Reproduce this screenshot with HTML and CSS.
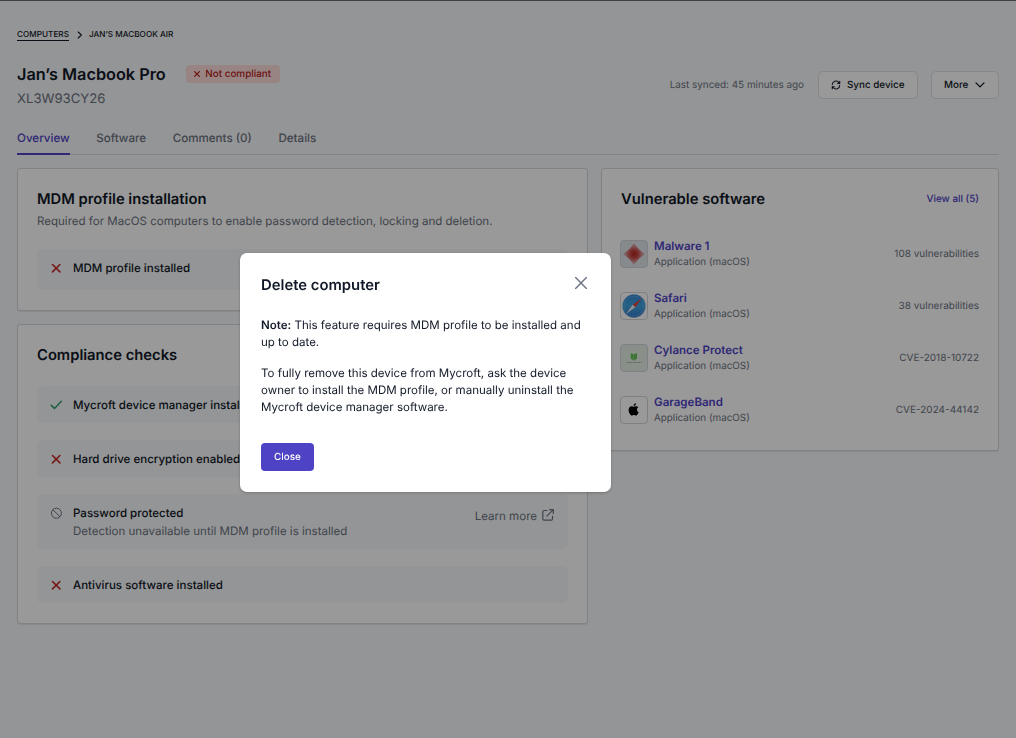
FILE: index.html
```html
<!DOCTYPE html>
<html lang="en">
<head>
  <meta charset="UTF-8">
  <meta name="viewport" content="width=device-width, initial-scale=1.0">
  <title>Jan’s Macbook Pro</title>
  <link rel="stylesheet" href="styles.css">
</head>
<body>

  <main class="page">
    <nav class="breadcrumb">
      <a href="#">Computers</a>
      <svg class="crumb-arrow" viewBox="0 0 6 8"><path d="M1.2 1 4.4 4 1.2 7"/></svg>
      <span>Jan’s Macbook Air</span>
    </nav>

    <header class="device-header">
      <div>
        <div class="title-row">
          <h1>Jan’s Macbook Pro</h1>
          <span class="badge"><svg viewBox="0 0 6 6"><path d="M.6.6 5.4 5.4M5.4.6.6 5.4"/></svg>Not compliant</span>
        </div>
        <p class="serial">XL3W93CY26</p>
      </div>
      <div class="actions">
        <span class="synced">Last synced: 45 minutes ago</span>
        <button type="button" class="btn btn-sync">
          <svg viewBox="0 0 24 24"><path d="M3 11a9 9 0 0 1 15.500-5.600L21 8M21 3v5h-5M21 13a9 9 0 0 1-15.500 5.600L3 16M3 21v-5h5"/></svg>
          Sync device
        </button>
        <button type="button" class="btn btn-more">
          More
          <svg viewBox="0 0 10 6"><path d="M1 .9 5 4.900 9 .9"/></svg>
        </button>
      </div>
    </header>

    <nav class="tabs">
      <a href="#" class="active">Overview</a>
      <a href="#">Software</a>
      <a href="#">Comments (0)</a>
      <a href="#">Details</a>
    </nav>

    <div class="columns">
      <div class="left">
        <section class="card mdm">
          <h2>MDM profile installation</h2>
          <p class="subtitle">Required for MacOS computers to enable password detection, locking and deletion.</p>
          <div class="check tall">
            <svg class="cross" viewBox="0 0 12 12"><path d="M2.500 2.500 9.900 9.900M9.900 2.500 2.500 9.900"/></svg>
            <span>MDM profile installed</span>
          </div>
        </section>

        <section class="card checks">
          <h2>Compliance checks</h2>
          <div class="check">
            <svg class="tick" viewBox="0 0 12 12"><path d="M1.300 6.400 4.500 9.400 11.400 2.300"/></svg>
            <span>Mycroft device manager installed</span>
          </div>
          <div class="check">
            <svg class="cross" viewBox="0 0 12 12"><path d="M2.500 2.500 9.900 9.900M9.900 2.500 2.500 9.900"/></svg>
            <span>Hard drive encryption enabled</span>
          </div>
          <div class="check detailed">
            <svg class="blocked" viewBox="0 0 12 12"><circle cx="6.400" cy="6.200" r="5"/><path d="M2.900 2.700 9.900 9.700"/></svg>
            <div>
              <span>Password protected</span>
              <p>Detection unavailable until MDM profile is installed</p>
            </div>
            <a href="#" class="learn">Learn more
              <svg viewBox="0 0 12 12"><path d="M5 1.500H2A1.200 1.200 0 0 0 .8 2.700V10A1.200 1.200 0 0 0 2 11.200H9.300A1.200 1.200 0 0 0 10.500 10V7M7.600.7H11.300V4.400M11.300.7 4.800 7.200"/></svg>
            </a>
          </div>
          <div class="check">
            <svg class="cross" viewBox="0 0 12 12"><path d="M2.500 2.500 9.900 9.900M9.900 2.500 2.500 9.900"/></svg>
            <span>Antivirus software installed</span>
          </div>
        </section>
      </div>

      <section class="card vulnerable">
        <div class="card-head">
          <h2>Vulnerable software</h2>
          <a href="#">View all (5)</a>
        </div>
        <ul class="apps">
          <li>
            <span class="app-icon malware">
              <svg viewBox="0 0 26 26">
                <defs>
                  <radialGradient id="red"><stop offset="0" stop-color="#b8201d"/><stop offset=".35" stop-color="#c64a47"/><stop offset="1" stop-color="#e1d3d7"/></radialGradient>
                </defs>
                <path fill="url(#red)" d="M13 1.500Q17 9 24.500 13 17 17 13 24.500 9 17 1.500 13 9 9 13 1.500z"/>
              </svg>
            </span>
            <div class="app-name"><a href="#">Malware 1</a><span>Application (macOS)</span></div>
            <span class="count">108 vulnerabilities</span>
          </li>
          <li>
            <span class="app-icon">
              <svg viewBox="0 0 26 26">
                <defs>
                  <linearGradient id="blue" x2="0" y2="1"><stop offset="0" stop-color="#3389d6"/><stop offset=".5" stop-color="#40a3df"/><stop offset="1" stop-color="#2f78cc"/></linearGradient>
                </defs>
                <circle cx="13" cy="13" r="12" fill="#d4dbe2"/>
                <circle cx="13" cy="13" r="11.400" fill="url(#blue)"/>
                <circle cx="13" cy="13" r="9.800" fill="none" stroke="#a6d0ee" stroke-width="1" stroke-dasharray=".5 1.200"/>
                <path fill="#e0403a" d="M20.800 5.200 11.700 11.700 14.300 14.300z"/>
                <path fill="#eceff2" d="M5.200 20.800 11.700 11.700 14.300 14.300z"/>
              </svg>
            </span>
            <div class="app-name"><a href="#">Safari</a><span>Application (macOS)</span></div>
            <span class="count">38 vulnerabilities</span>
          </li>
          <li>
            <span class="app-icon cylance">
              <svg viewBox="0 0 26 26">
                <path fill="#68c45b" d="M9.700 8.300 12.700 8.900V15.800L9.700 13.600zM16 8.300 13 8.900V15.800L16 13.600z"/>
                <path class="wordmark" d="M5.500 17.500H20.500"/>
              </svg>
            </span>
            <div class="app-name"><a href="#">Cylance Protect</a><span>Application (macOS)</span></div>
            <span class="count">CVE-2018-10722</span>
          </li>
          <li>
            <span class="app-icon">
              <svg viewBox="0 0 26 26">
                <path transform="translate(5.200 4.900) scale(.62)" d="M18.710 19.500c-.83 1.240-1.710 2.450-3.050 2.470-1.340.03-1.770-.79-3.290-.79-1.530 0-2 .77-3.270.82-1.310.05-2.300-1.320-3.140-2.530C4.250 17 2.940 12.450 4.700 9.390c.87-1.520 2.430-2.480 4.120-2.510 1.280-.02 2.500.87 3.290.87.78 0 2.260-1.070 3.810-.91.65.03 2.470.26 3.640 1.980-.09.06-2.170 1.280-2.150 3.810.03 3.020 2.650 4.030 2.680 4.040-.03.07-.42 1.440-1.380 2.830M13 3.500c.73-.83 1.940-1.460 2.940-1.500.13 1.170-.34 2.350-1.040 3.190-.69.85-1.830 1.510-2.950 1.420-.15-1.150.41-2.350 1.050-3.110z"/>
              </svg>
            </span>
            <div class="app-name"><a href="#">GarageBand</a><span>Application (macOS)</span></div>
            <span class="count">CVE-2024-44142</span>
          </li>
        </ul>
      </section>
    </div>
  </main>

  <div class="overlay">
    <div class="modal" role="dialog" aria-labelledby="modalTitle">
      <div class="modal-head">
        <h2 id="modalTitle">Delete computer</h2>
        <button type="button" class="dismiss" aria-label="Dismiss"><svg viewBox="0 0 12 12"><path d="M.6.6 11.400 11.400M11.400.6.6 11.400"/></svg></button>
      </div>
      <p><strong>Note:</strong> This feature requires MDM profile to be installed and up to date.</p>
      <p>To fully remove this device from Mycroft, ask the device owner to install the MDM profile, or manually uninstall the Mycroft device manager software.</p>
      <button type="button" class="btn-primary">Close</button>
    </div>
  </div>

</body>
</html>
```

FILE: styles.css
```css
* {
  box-sizing: border-box;
}
body {
  margin: 0;
  height: 738px;
  overflow: hidden;
  font-family: Inter, sans-serif;
  font-size: 11.54px;
  text-rendering: geometricPrecision;
  background: #f7f9fb;
  color: #111827;
}
h1, h2, p, ul {
  margin: 0;
  padding: 0;
}
a {
  color: inherit;
  text-decoration: none;
}
button {
  font-family: inherit;
  text-rendering: inherit;
  cursor: pointer;
}
svg {
  display: block;
  flex: none;
}
svg path {
  stroke-linecap: round;
  stroke-linejoin: round;
}
.page {
  height: 738px;
  padding: 27px 17px 0;
  border-top: 1px solid #6b6b70;
}
.breadcrumb {
  display: flex;
  align-items: center;
  height: 13px;
  font-size: 8.2px;
  font-weight: 500;
  line-height: 11px;
  text-transform: uppercase;
}
.breadcrumb a {
  margin-top: 1px;
  border-bottom: 1px solid #111827;
}
.crumb-arrow {
  width: 6px;
  height: 8px;
  margin: 0 6px 0 8px;
  fill: none;
  stroke: #111827;
  stroke-width: 1.1;
}
.device-header {
  display: flex;
  justify-content: space-between;
  height: 88px;
  padding-top: 21px;
}
.title-row {
  display: flex;
  align-items: center;
  gap: 20px;
  height: 24px;
}
h1 {
  font-size: 16.3px;
  font-weight: 600;
}
.badge {
  display: flex;
  align-items: center;
  gap: 5px;
  height: 18px;
  padding: 0 8.5px;
  border-radius: 4px;
  background: #fcdcda;
  color: #b91c1c;
  font-size: 9.9px;
  font-weight: 500;
}
.badge svg {
  width: 6px;
  height: 6px;
  stroke: #b91c1c;
  stroke-width: 1.2;
}
.serial {
  margin-top: 5px;
  font-size: 13.15px;
  line-height: 17px;
  color: #6b7280;
}
.actions {
  display: flex;
  align-items: center;
  height: 28px;
  margin-top: 9px;
}
.synced {
  margin-right: 14px;
  font-size: 9.9px;
  color: #6b7280;
}
.btn {
  display: flex;
  align-items: center;
  height: 28px;
  padding: 0 12px;
  border: 1px solid #dfe2e6;
  border-radius: 5px;
  background: #fff;
  color: #111827;
  font-size: 9.85px;
  font-weight: 500;
}
.btn svg {
  fill: none;
  stroke: #111827;
}
.btn-sync {
  width: 100px;
  gap: 6px;
  margin-right: 13px;
  white-space: nowrap;
}
.btn-sync svg {
  width: 10px;
  height: 10px;
  stroke-width: 2.6;
}
.btn-more {
  width: 68px;
  gap: 7px;
}
.btn-more svg {
  width: 10px;
  height: 6px;
  stroke-width: 1.3;
}
.tabs {
  display: flex;
  gap: 26.6px;
  height: 26px;
  border-bottom: 1px solid #d5d9df;
  font-size: 11.6px;
  font-weight: 500;
  line-height: 18px;
  color: #6b7280;
}
.tabs a {
  height: 26px;
}
.tabs .active {
  border-bottom: 2px solid #4f43c5;
  color: #4f43c5;
}
.columns {
  display: grid;
  grid-template-columns: 571px 398px;
  gap: 13px;
  align-items: start;
  margin-top: 13px;
}
.left {
  display: grid;
  gap: 13px;
}
.card {
  border: 1px solid #d5d9df;
  border-radius: 3px;
  background: #fff;
  padding: 20px 19px 0;
  box-shadow: 0 1px 1px rgba(0, 0, 0, 0.08);
}
.card h2 {
  font-size: 14.77px;
  font-weight: 600;
  line-height: 20px;
}
.mdm {
  height: 143px;
}
.checks {
  height: 300px;
}
.vulnerable {
  height: 283px;
}
.subtitle {
  margin-top: 4px;
  line-height: 16px;
  color: #6b7280;
}
.check {
  display: flex;
  height: 37px;
  margin-bottom: 17px;
  padding: 10px 14px 0 13px;
  border-radius: 5px;
  background: #f7f9fb;
  font-weight: 500;
  line-height: 18px;
}
.checks h2 {
  margin-bottom: 21px;
}
.check.tall {
  height: 41px;
  margin-top: 20px;
}
.check > svg {
  width: 12px;
  height: 12px;
  margin: 3px 11px 0 0;
  fill: none;
}
.check .cross {
  stroke: #c52a25;
  stroke-width: 1.6;
}
.check .tick {
  stroke: #2f9e6b;
  stroke-width: 1.5;
}
.check .blocked {
  stroke: #6b7280;
  stroke-width: 1;
}
.check.detailed {
  height: 55px;
}
.detailed p {
  font-weight: 400;
  color: #6b7280;
}
.learn {
  display: flex;
  gap: 5px;
  height: 17px;
  margin: 3px 0 0 auto;
  font-weight: 400;
  color: #6b7280;
}
.learn svg {
  width: 12px;
  height: 12px;
  margin-top: 2px;
  fill: none;
  stroke: #6b7280;
  stroke-width: 1.2;
}
.card-head {
  display: flex;
  justify-content: space-between;
}
.card-head a {
  font-size: 9.9px;
  font-weight: 500;
  line-height: 20px;
  color: #4f43c5;
}
.apps {
  display: grid;
  gap: 24px;
  margin: 31px 0 0 -1px;
  list-style: none;
}
.apps li {
  display: flex;
  align-items: center;
  height: 28px;
}
.app-icon {
  width: 28px;
  height: 28px;
  margin-right: 6px;
  border: 1px solid #d2d6dc;
  border-radius: 4px;
}
.malware {
  background: #e1e7eb;
}
.cylance {
  background: #e3f0e5;
}
.app-icon .wordmark {
  stroke: #a2b5a6;
  stroke-width: 1;
  stroke-dasharray: 1.5 0.5;
  stroke-linecap: butt;
}
.app-name {
  display: grid;
  grid-template-rows: 15px 17px;
  padding-top: 2px;
  line-height: 15px;
}
.app-name a {
  font-weight: 600;
  color: #4f43c5;
}
.app-name span {
  line-height: 17px;
}
.app-name span, .count {
  font-size: 9.85px;
  color: #6b7280;
}
.count {
  margin-left: auto;
  font-size: 10px;
}
.overlay {
  position: fixed;
  inset: 0;
  background: rgba(0, 0, 0, 0.4);
  display: flex;
  align-items: flex-start;
  justify-content: center;
  padding: 253px 165px 0 0;
}
.modal {
  width: 371px;
  height: 239px;
  padding: 22px 20px 0 21px;
  border-radius: 7px;
  background: #fff;
  box-shadow: 0 1px 3px rgba(0, 0, 0, 0.25);
}
.modal-head {
  display: flex;
  justify-content: space-between;
  margin-bottom: 22px;
}
.modal h2 {
  font-size: 14.85px;
  font-weight: 600;
  line-height: 20px;
}
.dismiss {
  width: 12px;
  height: 12px;
  margin: 2px 4.500px 0 0;
  padding: 0;
  border: 0;
  background: none;
}
.dismiss svg {
  width: 12px;
  height: 12px;
  stroke: #6b7280;
  stroke-width: 1.4;
}
.modal p {
  margin-bottom: 13px;
  line-height: 17.3px;
}
.modal strong {
  font-weight: 600;
}
.btn-primary {
  width: 53px;
  height: 28px;
  margin-top: 14px;
  padding: 0;
  border: 0;
  border-radius: 4px;
  background: #4f43c5;
  color: #fff;
  font-size: 9.9px;
  font-weight: 500;
}
```
